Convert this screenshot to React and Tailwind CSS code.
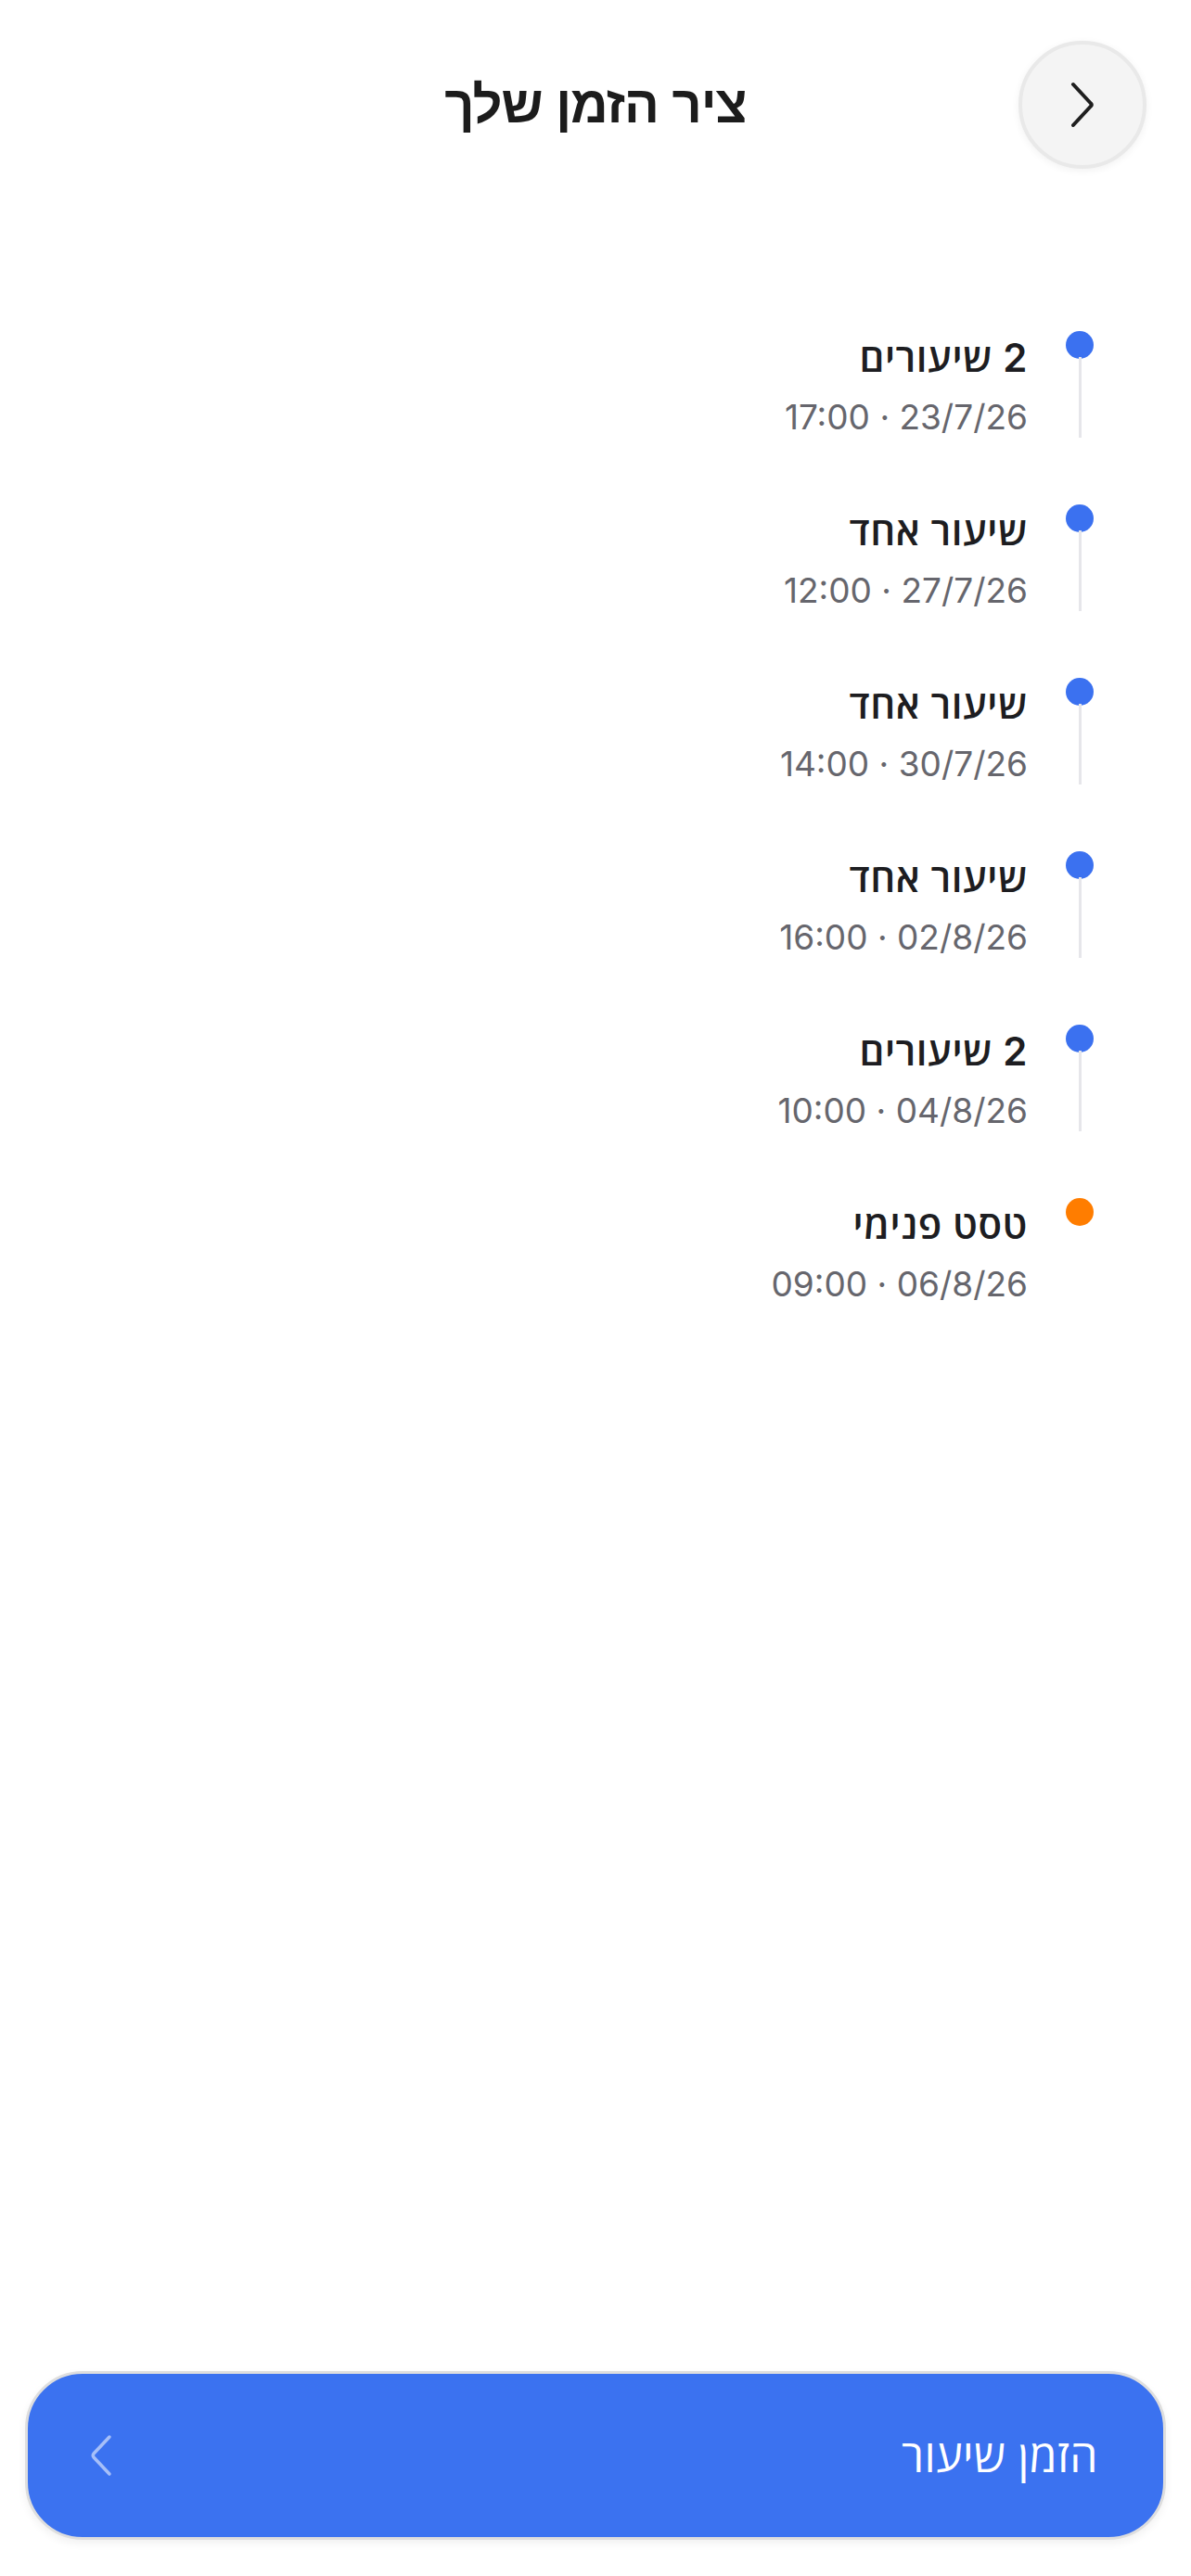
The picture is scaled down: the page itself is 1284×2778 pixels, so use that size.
import React from 'react';

const items = [
  { title: '2 שיעורים', when: '23/7/26 · 17:00', color: 'bg-[#3b71f0]' },
  { title: 'שיעור אחד', when: '27/7/26 · 12:00', color: 'bg-[#3b71f0]' },
  { title: 'שיעור אחד', when: '30/7/26 · 14:00', color: 'bg-[#3b71f0]' },
  { title: 'שיעור אחד', when: '02/8/26 · 16:00', color: 'bg-[#3b71f0]' },
  { title: '2 שיעורים', when: '04/8/26 · 10:00', color: 'bg-[#3b71f0]' },
  { title: 'טסט פנימי', when: '06/8/26 · 09:00', color: 'bg-[#ff7d00]' },
];

function TimelineItem({ item, last }) {
  return (
    <div className="flex flex-row items-stretch gap-[41px]">
      {/* dot + line */}
      <div className="flex flex-col items-center w-[30px] shrink-0">
        <div className={`w-[30px] h-[30px] rounded-full ${item.color} shrink-0`} />
        {!last && <div className="w-[3px] flex-1 bg-[#e6e6ea] -mt-[2px]" />}
      </div>
      <div className="pt-[5px] flex flex-col">
        <div className="text-[42px] leading-[48px] tracking-[0.6px] font-semibold text-[#1d1d21] font-['Inter','Open_Sans','Liberation_Sans',sans-serif]">
          {item.title}
        </div>
        <div className="text-[37px] leading-[44px] mt-[18px] text-[#66666d] font-['Inter','Liberation_Sans',sans-serif]">
          {item.when}
        </div>
      </div>
    </div>
  );
}

export default function App() {
  return (
    <div
      dir="rtl"
      className="min-h-screen bg-white flex flex-col"
      style={{ fontFamily: '"Liberation Sans", "DejaVu Sans", sans-serif' }}
    >
      {/* Header */}
      <header className="grid grid-cols-[138px_1fr_138px] items-center px-[48px] pt-[44px]">
        <button className="w-[138px] h-[138px] rounded-full bg-[#f4f4f4] border-[4px] border-[#e9e9e9] shadow-[0_2px_8px_rgba(0,0,0,0.06)] flex items-center justify-center">
          <svg width="26" height="50" viewBox="0 0 26 50" fill="none">
            <path d="M3 3 L22 23.5 Q23.5 25 22 26.5 L3 47" stroke="#1f1f1f" strokeWidth="4" strokeLinecap="round" strokeLinejoin="round" />
          </svg>
        </button>
        <h1 className="text-center text-[56px] leading-none font-black text-[#1c1c1c] tracking-[-1px]">ציר הזמן שלך</h1>
        <div />
      </header>

      {/* Timeline */}
      <main className="flex flex-col gap-[72px] pt-[175px] pr-[105px]">
        {items.map((item, i) => (
          <TimelineItem key={i} item={item} last={i === items.length - 1} />
        ))}
      </main>

      {/* Bottom action */}
      <footer className="mt-auto px-[27px] pb-[39px]">
        <button className="w-full h-[182px] rounded-[62px] bg-[#3b72f0] border-[3px] border-[#dedede] shadow-[0_4px_10px_rgba(0,0,0,0.06)] flex items-center justify-between pr-[70px] pl-[66px]">
          <span className="text-[48px] text-white font-normal tracking-[0.5px] font-['Open_Sans','Liberation_Sans',sans-serif]">הזמן שיעור</span>
          <svg width="26" height="46" viewBox="0 0 26 46" fill="none">
            <path d="M22 3 L5 21 Q3.5 23 5 25 L22 43" stroke="rgba(255,255,255,0.55)" strokeWidth="3.5" strokeLinecap="round" strokeLinejoin="round" />
          </svg>
        </button>
      </footer>
    </div>
  );
}
